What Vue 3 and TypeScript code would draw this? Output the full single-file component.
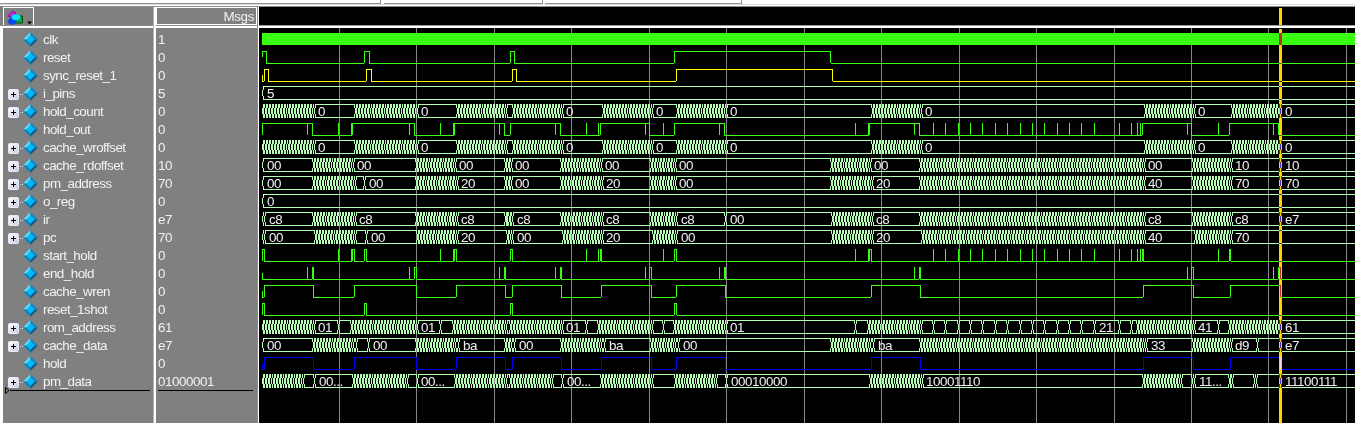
<script setup lang="ts">
type Item = number | [number, number]
interface Label { x: number; t: string }
interface Signal {
  name: string
  value: string
  kind: 'clock' | 'bit' | 'bus'
  color?: string
  /** bit: x of each level change, a repeated x makes a one pixel spike */
  edges?: number[]
  high?: boolean
  /** initial undefined half level drawn at the start */
  half?: 'top' | 'bottom'
  /** bus: single transitions or ranges that change on every clock */
  items?: Item[]
  labels?: Label[]
}

const START = 262
const END = 1355
const PERIOD = 1.5492
const ROW = 18

const parseLabels = (s: string): Label[] =>
  s.split(' ').map((p) => {
    const [t, x] = p.split('@')
    return { t, x: Number(x) }
  })

const spikes = (...xs: number[]): number[] => xs.flatMap((x) => [x, x])
const ticks = [933, 945, 958, 970, 982, 995, 1007, 1020, 1032, 1044, 1057, 1069, 1081, 1094, 1119, 1131]

const countItems: Item[] = [[262, 314], [355, 417], [457, 506], [513, 562], [603, 652], [677, 726], [872, 921], [1145, 1194], [1232, 1280]]
const countLabels = '0@318 0@421 0@566 0@656 0@730 0@925 0@1198 0@1285'
const wren = [264, 313, 354, 416, 456, 505, 512, 561, 601, 651, 676, 725, 871, 920, 1143, 1193, 1230, 1280]

const bus = (name: string, value: string, items: Item[], labels: string): Signal => ({
  name, value, kind: 'bus', items, labels: parseLabels(labels),
})
const bit = (name: string, value: string, edges: number[], extra: Partial<Signal> = {}): Signal => ({
  name, value, kind: 'bit', edges, ...extra,
})

const signals: Signal[] = [
  { name: 'clk', value: '1', kind: 'clock' },
  bit('reset', '0', [266, 364, 369, 510, 514, 674, 830], { high: true, half: 'top' }),
  bit('sync_reset_1', '0', [264, 268, 366, 371, 512, 516, 676, 832], { color: '#ffff00', half: 'bottom' }),
  bus('i_pins', '5', [262], '5@267'),
  bus('hold_count', '0', countItems, countLabels),
  bit('hold_out', '0', [
    262, ...spikes(307), 312, ...spikes(338), 351, 351, 352, ...spikes(409), 414, ...spikes(440), 453, 453, 454,
    ...spikes(499), 504, 510, ...spikes(555), 560, ...spikes(586, 598), 600, ...spikes(645), 649, ...spikes(663),
    674, ...spikes(719), 724, ...spikes(855, 868), 869, ...spikes(914), 919, ...spikes(...ticks, 1137, 1140),
    1142, ...spikes(1187), 1191, ...spikes(1218), 1229, ...spikes(1273), 1278,
  ]),
  bus('cache_wroffset', '0', countItems, countLabels),
  bus('cache_rdoffset', '10',
    [262, [313, 353], [416, 455], [505, 511], [561, 601], [651, 675], [831, 870], [920, 1144], [1193, 1231], 1280],
    '00@267 00@357 00@459 00@515 00@605 00@679 00@874 00@1148 10@1235 10@1285'),
  bus('pm_address', '70',
    [262, [313, 355], 364, [416, 457], [505, 511], [561, 602], [651, 675], [831, 872], [920, 1144], [1193, 1231], 1280],
    '00@267 00@369 20@461 00@515 20@606 00@679 20@876 40@1148 70@1235 70@1285'),
  bus('o_reg', '0', [262], '0@267'),
  bus('ir', 'e7',
    [262, 264, [313, 355], [416, 457], [505, 512], [561, 602], [651, 676], 725, [832, 872], [920, 1144], [1193, 1231], 1280],
    'c8@269 c8@359 c8@461 c8@517 c8@606 c8@681 00@730 c8@876 c8@1148 c8@1235 e7@1285'),
  bus('pc', '70',
    [262, 264, [315, 355], 366, [417, 457], [507, 512], [563, 602], [653, 676], [832, 872], [922, 1144], [1195, 1231]],
    '00@269 00@371 20@461 00@517 20@606 00@681 20@876 40@1148 70@1235'),
  bit('start_hold', '0', [
    262, 264, ...spikes(338), 351, 351, 352, 354, 364, 366, ...spikes(440), 453, 453, 454, 456, 510, 512,
    ...spikes(586, 598), 600, 601, ...spikes(663), 674, 676, ...spikes(855, 868), 869, 871,
    ...spikes(...ticks, 1137, 1140), 1142, 1143, ...spikes(1218), 1229, 1230,
  ]),
  bit('end_hold', '0', [
    ...spikes(307), 312, 313, ...spikes(409), 414, 416, ...spikes(499), 504, 505, ...spikes(555), 560, 561,
    ...spikes(645), 649, 651, ...spikes(719), 724, 725, ...spikes(914), 919, 920, ...spikes(1187), 1191, 1193,
    ...spikes(1273), 1278, 1280,
  ], { half: 'bottom' }),
  bit('cache_wren', '0', wren, { half: 'bottom' }),
  bit('reset_1shot', '0', [262, 264, 364, 366, 510, 512, 674, 676]),
  bus('rom_address', '61',
    [[262, 314], 338, [351, 417], 440, [453, 506], [510, 562], 586, [598, 652], 663, [674, 726], 855, [868, 921],
      ...ticks, [1137, 1194], 1218, [1229, 1280]],
    '01@318 01@421 01@566 01@730 21@1099 41@1198 61@1285'),
  bus('cache_data', 'e7',
    [262, [313, 353], 356, 368, [416, 455], 458, [505, 511], 514, [561, 601], 604, [651, 675], 678, [831, 870], 873,
      [920, 1144], 1146, [1193, 1231], 1257, 1280],
    '00@267 00@373 ba@463 00@519 ba@609 00@683 ba@878 33@1151 d9@1235 e7@1285'),
  bit('hold', '0', wren, { color: '#0000f0', half: 'bottom' }),
  bus('pm_data', '01000001',
    [[262, 303], 314, [353, 407], 417, [455, 506], [510, 552], 562, [601, 652], [675, 716], 726, [870, 922],
      [1143, 1181], 1192, 1194, [1229, 1232], 1254, 1256, 1280],
    '00...@319 00...@421 00...@567 00010000@731 10001110@926 11...@1199 11100111@1285'),
]

const rect = (x: number, y: number, w: number, h: number): string => `M${x} ${y}h${w}v${h}h${-w}z`

function bitPath(s: Signal, row: number): string {
  const top = 33 + row * ROW
  const low = top + 12
  let level = s.high ? top : low
  let x = START
  let d = ''
  if (s.half === 'top') d += rect(START, top, 1, 6)
  if (s.half === 'bottom') d += rect(START, top + 6, 1, 6)
  for (const e of s.edges ?? []) {
    if (e > x) d += rect(x, level, e - x, 1)
    d += rect(e, top, 1, 12)
    level = level === low ? top : low
    x = e
  }
  return d + rect(x + 1, level, END - x - 1, 1)
}

function busPath(s: Signal, row: number): string {
  const top = 32 + row * ROW
  const xs: number[] = []
  for (const it of s.items ?? []) {
    if (typeof it === 'number') { xs.push(it); continue }
    const [a, b] = it
    const n = Math.max(1, Math.round((b - a) / PERIOD))
    for (let k = 0; k <= n; k++) xs.push(Math.floor(a + ((b - a) * k) / n + 0.001))
  }
  let d = ''
  xs.forEach((x, i) => {
    const prev = i > 0 ? xs[i - 1] : START - 1
    const next = i + 1 < xs.length ? xs[i + 1] : END
    d += rect(x, top + 4, 1, 6)
    if (x - prev > 1) d += rect(x - 1, top, 1, 4) + rect(x - 1, top + 10, 1, 4)
    d += rect(x + 1, top, 1, 4) + rect(x + 1, top + 10, 1, 4)
    if (next - x > 1) {
      d += rect(x + 1, top, next - x - 1, 1) + rect(x + 1, top + 13, next - x - 1, 1)
    }
  })
  return d
}

const waves = signals.map((s, i) => ({
  d: s.kind === 'clock' ? rect(START, 33, END - START, 12) : s.kind === 'bit' ? bitPath(s, i) : busPath(s, i),
  fill: s.color ?? (s.kind === 'bus' ? '#b4ffb4' : '#38ff12'),
  labels: s.labels ?? [],
  y: 44 + i * ROW,
}))

const grid = Array.from({ length: 14 }, (_, i) => Math.floor(START + (i + 1) * 77.46))
</script>

<template>
  <div class="app">
    <div class="tabs">
      <span class="tab first"></span>
      <span class="tab second"></span>
      <span class="tab third"></span>
    </div>
    <div class="main">
      <section class="names">
        <header class="head">
          <div class="tool">
            <svg width="28" height="17" viewBox="0 0 28 17">
              <path d="M3.5 8L8.5 3.2L12 5L8 9.5z" fill="#d020e8" stroke="#600070" stroke-width=".7" />
              <path d="M11 8H18.5V15H11z" fill="#10a838" stroke="#064b18" stroke-width="1" />
              <path d="M3.5 13L6.5 9.5H11L12.8 12.5L10.5 16.5H5.5z" fill="#0848e8" />
              <ellipse cx="12" cy="9.3" rx="4.3" ry="3" fill="#00e4ff" />
              <path d="M23 13.5H28L25.5 16.5z" fill="#000" />
            </svg>
          </div>
        </header>
        <div class="body">
          <div v-for="s in signals" :key="s.name" class="row">
            <span class="expander">
              <svg v-if="s.kind === 'bus'" width="16" height="12" viewBox="0 0 16 12">
                <defs>
                  <linearGradient id="box" x1="0" y1="0" x2="1" y2="1">
                    <stop offset="0" stop-color="#ffffff" />
                    <stop offset="1" stop-color="#c8cbe0" />
                  </linearGradient>
                </defs>
                <rect x=".5" y=".5" width="10" height="10" rx="1" fill="url(#box)" stroke="#e8eaf4" />
                <path d="M3 5.5H8M5.5 3V8" stroke="#000" shape-rendering="crispEdges" />
                <path d="M12 5h1v1h-1zM14 5h1v1h-1z" fill="#e0e0e0" />
              </svg>
            </span>
            <svg class="gem" width="15" height="15" viewBox="0 0 15 15">
              <path d="M7.5 0L0 7.5H7.5z" fill="#62d8f8" />
              <path d="M7.5 0L15 7.5H7.5z" fill="#1688c4" />
              <path d="M0 7.5L7.5 15V7.5z" fill="#1080bc" />
              <path d="M15 7.5L7.5 15V7.5z" fill="#085f90" />
              <path d="M7.5 3.3L11.7 7.5L7.5 11.7L3.3 7.5z" fill="#00baf8" />
            </svg>
            <span class="text">{{ s.name }}</span>
          </div>
          <div class="marker">
            <svg width="5" height="7" viewBox="0 0 5 7"><path d="M.5 .5L4 3.5L.5 6.5z" fill="none" stroke="#000" /></svg>
            <i class="rule"></i>
          </div>
        </div>
      </section>
      <div class="split"></div>
      <section class="values">
        <header class="head msgs"><span>Msgs</span></header>
        <div class="body">
          <div v-for="s in signals" :key="s.name" class="row value">{{ s.value }}</div>
          <div class="marker value-marker"><i class="rule"></i></div>
        </div>
      </section>
      <div class="split edge"></div>
      <section class="spacer"><header class="head"></header></section>
    </div>
    <svg class="waves" width="1355" height="423" viewBox="0 0 1355 423">
      <g shape-rendering="crispEdges">
        <path v-for="x in grid" :key="x" :d="`M${x} 28h1V423h-1z`" fill="#868686" />
        <path v-for="(w, i) in waves" :key="i" :d="w.d" :fill="w.fill" />
      </g>
      <g class="captions">
        <template v-for="(w, i) in waves" :key="i">
          <text v-for="l in w.labels" :key="l.x" :x="l.x" :y="w.y">{{ l.t }}</text>
        </template>
      </g>
      <path class="cursor" d="M1279 8h3v17h-3zM1279 29h3V423h-3z" shape-rendering="crispEdges" />
    </svg>
  </div>
</template>

<style>
body { margin: 0; background: #fff; }
</style>

<style scoped>
.app {
  position: relative;
  isolation: isolate;
  width: 1355px;
  height: 423px;
  overflow: hidden;
  background: #fff;
  font: 13.4px/18px "Liberation Sans", Arial, sans-serif;
  color: #f2f2f2;
}
.tabs {
  display: flex;
  height: 7px;
  box-sizing: border-box;
  border-bottom: 1px solid #8c8c8c;
  background: linear-gradient(#fff 0 4px, #dcdcdc 4px 5px, #fff 5px);
}
.tab {
  height: 4px;
  box-sizing: border-box;
  border-right: 1px solid #909090;
  border-bottom: 1px solid #909090;
}
.first { width: 381px; }
.second { width: 159px; margin-left: 3px; }
.third { width: 197px; margin-left: 2px; }
.main { display: flex; height: 416px; }
.names { width: 153px; display: flex; flex-direction: column; }
.values { width: 101px; display: flex; flex-direction: column; }
.spacer { flex: 1; background: #000; }
.head {
  height: 21px;
  box-sizing: border-box;
  background: #808080;
  border-bottom: 2px solid #fff;
  box-shadow: inset 0 -1px #8c8c8c;
}
.spacer .head { background: #000; box-shadow: inset 0 -1px #9a9a9a; }
.tool {
  width: 31px;
  height: 18px;
  margin-left: 3px;
  box-sizing: border-box;
  border: 1px solid #fff;
  border-bottom: 0;
}
.tool svg { display: block; }
.msgs {
  display: flex;
  padding-bottom: 1px;
}
.msgs span {
  flex: 1;
  border: 1px solid #fff;
  padding-right: 2px;
  line-height: 18px;
  height: 16px;
  text-align: right;
  letter-spacing: -0.35px;
}
.body { flex: 1; background: #808080; padding-top: 3px; }
.names .body { border-left: 3px solid #fff; }
.row { height: 18px; display: flex; align-items: center; white-space: nowrap; }
.expander { width: 20px; height: 12px; padding-left: 5px; box-sizing: border-box; line-height: 0; }
.expander svg { display: block; margin-top: 1px; }
.gem { flex: none; margin-top: -1px; }
.text { margin-left: 5px; letter-spacing: -0.52px; }
.value { padding-left: 2px; letter-spacing: -0.45px; }
.marker { display: flex; align-items: center; height: 7px; margin: -4px 3px 0 2px; }
.marker svg { flex: none; }
.marker .rule { flex: 1; height: 1px; background: #000; }
.value-marker { margin: -4px 4px 0 2px; }
.split { width: 3px; background: linear-gradient(90deg, #b4b4b4 0 1px, #fff 1px); }
.split.edge { width: 2px; background: linear-gradient(90deg, #8c8c8c 0 1px, #fff 1px); }
.waves { position: absolute; left: 0; top: 0; }
.captions { fill: #f0f0f0; letter-spacing: -0.45px; }
.cursor { fill: #ffd200; mix-blend-mode: difference; }
</style>
